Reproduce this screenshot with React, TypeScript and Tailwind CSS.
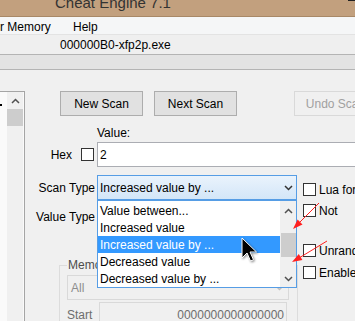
import React from "react";

function Chev({ up = false, color = "#404040" }: { up?: boolean; color?: string }) {
  return (
    <svg width="9" height="6" viewBox="0 0 9 6" className="block">
      <polyline
        points={up ? "1,5 4.5,1.5 8,5" : "1,1 4.5,4.5 8,1"}
        fill="none"
        stroke={color}
        strokeWidth="1.5"
      />
    </svg>
  );
}

function Check({ label }: { label: string }) {
  return (
    <div className="flex items-center h-[13px] whitespace-nowrap">
      <div className="w-[13px] h-[13px] border border-[#333] bg-white shrink-0" />
      <span className="ml-[3px]">{label}</span>
    </div>
  );
}

const items = [
  "Value between...",
  "Increased value",
  "Increased value by ...",
  "Decreased value",
  "Decreased value by ...",
];

export default function App() {
  return (
    <div className="relative w-[355px] h-[321px] overflow-hidden bg-[#f0f0f0] font-['Liberation_Sans',Arial,sans-serif] text-[12px] leading-[14px] text-black">
      {/* title bar */}
      <div className="h-[17px] bg-[#c2a07e] border-b border-[#a88867] overflow-hidden flex">
        <span className="ml-[55px] mt-[-5px] text-[15px] leading-[15px] text-[#333] whitespace-nowrap">
          Cheat Engine 7.1
        </span>
        <div className="ml-auto w-[7px] h-[1px] bg-[#222]" />
      </div>
      {/* menu bar */}
      <div className="h-[18px] bg-[#f5f6f7] border-b border-[#e3e3e3] pt-[3px] flex whitespace-nowrap">
        <span className="inline-block w-[73px]">r Memory</span>
        <span>Help</span>
      </div>
      {/* process row */}
      <div className="h-[20px] bg-[#efefef] border-b border-[#b4b4b4] pt-[3px] pl-[60px] whitespace-nowrap">
        000000B0-xfp2p.exe
      </div>
      <div className="h-[15px] bg-[#e3e3e3] border-b border-[#b4b4b4]" />

      {/* content */}
      <div className="flex h-[251px]">
        {/* left list */}
        <div className="w-[25px] shrink-0 mt-[21px] border-t border-r border-[#a5a5a5] flex">
          <div className="w-[7px] bg-[#fafafa] pt-[12px]">
            <div className="w-[2px] h-[2px] bg-black" />
          </div>
          <div className="w-[16px] bg-[#f0f0f0] flex flex-col items-center">
            <div className="h-[17px] flex items-center">
              <Chev up color="#505050" />
            </div>
            <div className="w-[16px] h-[17px] bg-[#cdcdcd]" />
          </div>
          <div className="w-[1px] bg-[#fafafa]" />
        </div>

        {/* main */}
        <div className="flex-1 flex flex-col">
          {/* buttons */}
          <div className="mt-[21px] pl-[35px] flex">
            <div className="shrink-0 w-[83px] h-[25px] border border-[#adadad] bg-[#e1e1e1] flex items-center justify-center">
              New Scan
            </div>
            <div className="shrink-0 ml-[11px] w-[83px] h-[25px] border border-[#adadad] bg-[#e1e1e1] flex items-center justify-center">
              Next Scan
            </div>
            <div className="shrink-0 ml-[57px] w-[83px] h-[25px] border border-[#d9d9d9] bg-[#f0f0f0] text-[#a0a0a0] flex items-center justify-center whitespace-nowrap">
              Undo Scan
            </div>
          </div>
          {/* value label */}
          <div className="mt-[10px] pl-[72px] h-[14px]">Value:</div>
          {/* hex row */}
          <div className="mt-[2px] flex items-center h-[25px]">
            <div className="w-[72px] shrink-0 flex items-center justify-end pr-[3px]">
              <span>Hex</span>
              <div className="ml-[9px] w-[13px] h-[13px] border border-[#333] bg-white" />
            </div>
            <div className="flex-1 h-[25px] border border-r-0 border-[#abadb3] bg-white pl-[2px] flex items-center">
              2
            </div>
          </div>

          {/* scan options */}
          <div className="mt-[8px] flex">
            <div className="w-[272px] shrink-0 flex flex-col">
              {/* scan type */}
              <div className="flex items-center h-[25px]">
                <div className="w-[72px] shrink-0 text-right pr-[2px] whitespace-nowrap">Scan Type</div>
                <div className="relative w-[200px] h-[25px] shrink-0">
                  <div className="h-[25px] border border-[#569de5] bg-gradient-to-b from-[#eaf3fc] to-[#d3e6f8] flex items-center justify-between pl-[2px] pr-[3px] whitespace-nowrap">
                    <span>Increased value by ...</span>
                    <Chev color="#333" />
                  </div>
                  {/* dropdown list */}
                  <div className="absolute z-10 left-0 top-[25px] w-[200px] h-[88px] border border-[#569de5] bg-white flex">
                    <div className="flex-1 pt-[1px] flex flex-col">
                      {items.map((t, i) => (
                        <div
                          key={t}
                          className={
                            i === 2
                              ? "h-[17px] flex items-center pl-[2px] whitespace-nowrap bg-[#3399ff] text-white"
                              : "h-[17px] flex items-center pl-[2px] whitespace-nowrap"
                          }
                        >
                          {t}
                        </div>
                      ))}
                    </div>
                    <div className="w-[16px] bg-[#f0f0f0] flex flex-col items-center">
                      <div className="h-[19px] flex items-center">
                        <Chev up color="#505050" />
                      </div>
                      <div className="mt-[13px] w-[15px] h-[24px] bg-[#cdcdcd]" />
                      <div className="flex-1" />
                      <div className="h-[16px] flex items-center">
                        <Chev color="#505050" />
                      </div>
                    </div>
                  </div>
                </div>
              </div>
              {/* value type */}
              <div className="mt-[4px] flex items-center h-[25px]">
                <div className="w-[72px] shrink-0 text-right pr-[2px] whitespace-nowrap">Value Type</div>
                <div className="w-[200px] h-[25px] border border-[#acacac] bg-[#e5e5e5]" />
              </div>
              {/* memory scan options group */}
              <fieldset className="mt-[29px] ml-[34px] w-[239px] border border-[#dcdcdc] px-[7px]">
                <legend className="pl-[1px] w-[30px] overflow-hidden text-[#4d4d4d] whitespace-nowrap">
                  Memory Scan Options
                </legend>
                <div className="mt-[3px] w-[222px] h-[25px] border border-[#d9d9d9] bg-[#f0f0f0] flex items-center justify-between pl-[3px] pr-[4px] text-[#8d8d8d]">
                  <span>All</span>
                  <Chev color="#bfbfbf" />
                </div>
                <div className="mt-[2px] flex items-center h-[25px]">
                  <div className="w-[32px] shrink-0 text-[#6d6d6d]">Start</div>
                  <div className="w-[188px] h-[25px] border border-[#d9d9d9] bg-[#f0f0f0] flex items-center justify-end pr-[2px] text-[#6d6d6d]">
                    0000000000000000
                  </div>
                </div>
              </fieldset>
            </div>

            {/* right checkboxes */}
            <div className="ml-[6px] flex flex-col">
              <div className="mt-[8px]">
                <Check label="Lua formula" />
              </div>
              <div className="mt-[8px]">
                <Check label="Not" />
              </div>
              <div className="mt-[27px]">
                <Check label="Unrandomizer" />
              </div>
              <div className="mt-[9px]">
                <Check label="Enable Speedhack" />
              </div>
            </div>
          </div>
        </div>
      </div>

      {/* red arrows */}
      <svg className="absolute left-0 top-0 pointer-events-none z-20" width="355" height="321" viewBox="0 0 355 321">
        <line x1="319" y1="203" x2="298" y2="224" stroke="#ff2020" strokeWidth="1" />
        <polygon points="293,229 302.5,224.4 297.6,219.5" fill="#ff2020" />
        <line x1="327" y1="241" x2="299" y2="258" stroke="#ff2020" strokeWidth="1" />
        <polygon points="292,262 302.4,259.9 298.8,253.9" fill="#ff2020" />
      </svg>

      {/* mouse cursor */}
      <svg
        className="absolute left-[241px] top-[237px] pointer-events-none z-30"
        width="18"
        height="26"
        viewBox="0 0 18 26"
        style={{ filter: "drop-shadow(1px 1px 1px rgba(0,0,0,0.45))" }}
      >
        <path
          d="M1 1 L1 21 L6 16 L9.5 24 L12.5 22.8 L9 15 L15.5 15 Z"
          fill="#000"
          stroke="#fff"
          strokeWidth="1"
          strokeLinejoin="miter"
        />
      </svg>
    </div>
  );
}
